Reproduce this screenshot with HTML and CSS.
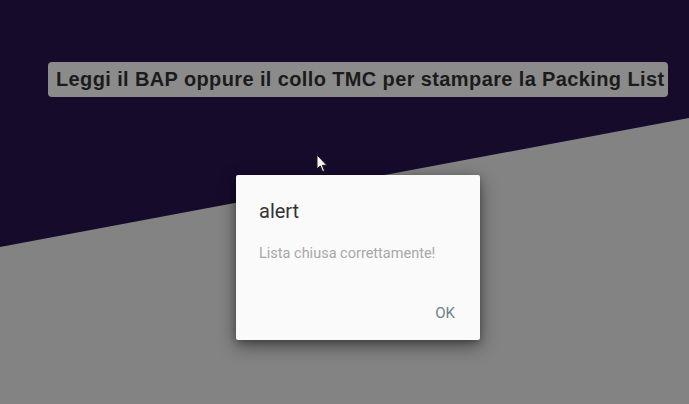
FILE: index.html
```html
<!DOCTYPE html>
<html lang="it">
<head>
<meta charset="utf-8">
<title>Packing List</title>
<link rel="stylesheet" href="styles.css">
</head>
<body>
<div class="screen">
  <div class="lower-band"></div>
  <div class="prompt-row">
    <span class="prompt">Leggi il BAP oppure il collo TMC per stampare la Packing List</span>
  </div>
  <svg class="cursor" width="12" height="19" viewBox="0 0 12 19">
    <path d="M1 1 L1 15 L4.3 12 L6.6 17.6 L8.6 16.8 L6.3 11.3 L10.8 11.3 Z" fill="#ffffff" stroke="#1a1a1a" stroke-width="1" stroke-linejoin="round"/>
  </svg>
  <div class="dialog" role="alertdialog">
    <div class="dialog-title">alert</div>
    <div class="dialog-message">Lista chiusa correttamente!</div>
    <div class="dialog-actions"><span class="dialog-btn">OK</span></div>
  </div>
</div>
</body>
</html>
```

FILE: styles.css
```css
html, body {
  margin: 0;
  padding: 0;
}
body {
  width: 689px;
  height: 404px;
  overflow: hidden;
  background: #170b2c;
}
.screen {
  position: relative;
  width: 689px;
  height: 404px;
  padding: 62px 0 0 48px;
  box-sizing: border-box;
  background: #170b2c;
  overflow: hidden;
}
.lower-band {
  position: absolute;
  inset: 0;
  background: #838383;
  clip-path: polygon(0 247px, 689px 118px, 689px 404px, 0 404px);
}
.prompt-row {
  position: relative;
  display: flex;
}
.prompt {
  display: inline-block;
  height: 35px;
  line-height: 35px;
  padding: 0 4px 0 8px;
  background: #8b8b8b;
  border-radius: 4px;
  color: #1b1b1b;
  font-family: "Liberation Sans", Arial, sans-serif;
  font-weight: bold;
  font-size: 20px;
  letter-spacing: 0.38px;
  white-space: nowrap;
}
.cursor {
  position: absolute;
  left: 316px;
  top: 154px;
}
.dialog {
  position: absolute;
  left: 236px;
  top: 175px;
  width: 244px;
  height: 165px;
  box-sizing: border-box;
  padding: 24px 25px 0 23px;
  background: #fafafa;
  border-radius: 2px;
  box-shadow: 0 6px 18px rgba(0, 0, 0, 0.45), 0 2px 6px rgba(0, 0, 0, 0.25);
  font-family: Roboto, "Noto Sans", sans-serif;
  display: flex;
  flex-direction: column;
}
.dialog-title {
  font-size: 20px;
  line-height: 24px;
  color: #343434;
}
.dialog-message {
  margin-top: 21px;
  font-size: 14.5px;
  line-height: 20px;
  color: #a8a8a8;
}
.dialog-actions {
  margin-top: 39px;
  display: flex;
  justify-content: flex-end;
}
.dialog-btn {
  font-size: 15px;
  line-height: 20px;
  color: #6d8284;
}
```
